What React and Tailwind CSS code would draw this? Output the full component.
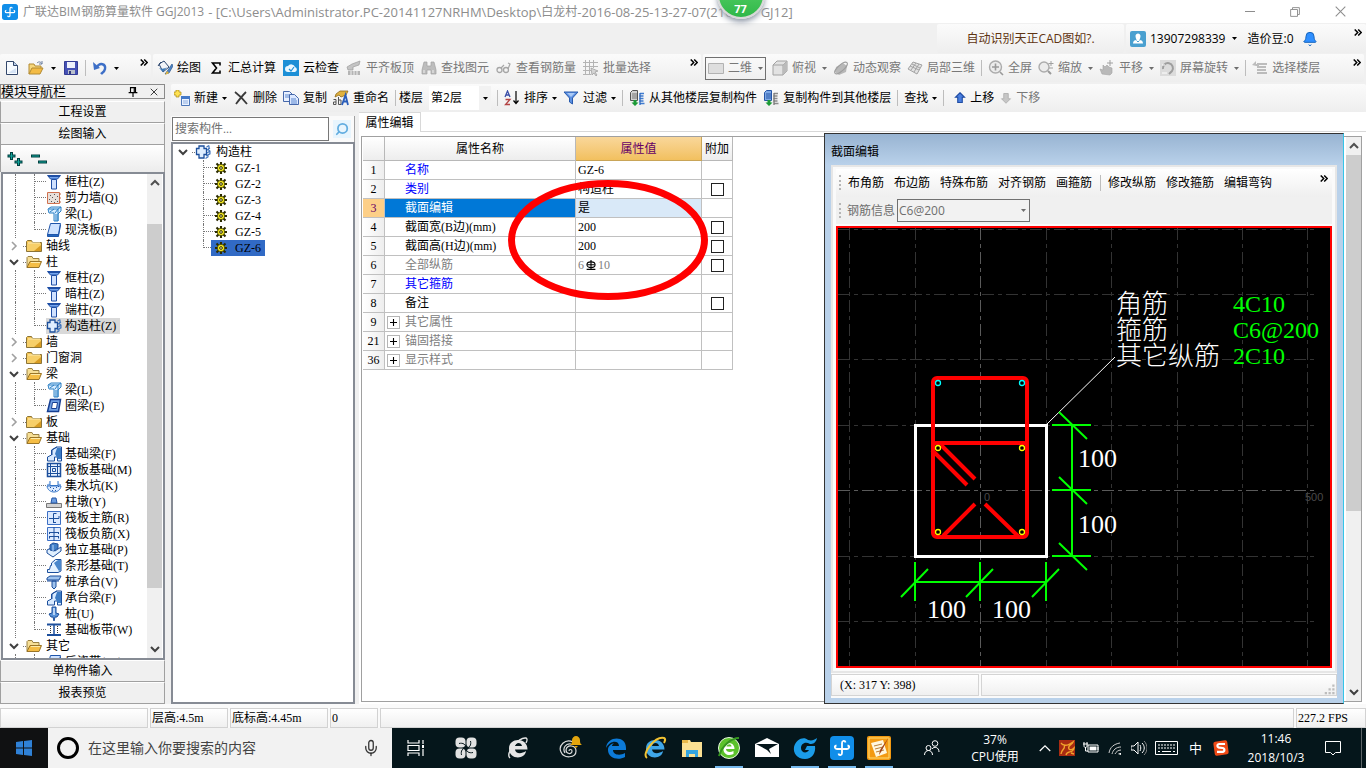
import { useState } from 'react';
import { Bell, Mic, Search, X } from 'lucide-react';

const ui = "font-['Open_Sans','Noto_Sans_CJK_SC',sans-serif]";
const song = "font-['Liberation_Serif','Noto_Sans_CJK_SC',serif]";

/* ---------- small shared pieces ---------- */

function Ico({ children, className = 'h-4 w-4' }) {
  return (
    <svg viewBox="0 0 16 16" fill="none" className={`shrink-0 ${className}`} aria-hidden="true">
      {children}
    </svg>
  );
}

function Caret({ gray }) {
  return (
    <svg viewBox="0 0 5 3" className="h-[3px] w-[5px] shrink-0" aria-hidden="true">
      <path d="M0 0h5L2.5 3z" fill={gray ? '#6d6d6d' : '#000'} />
    </svg>
  );
}

function More({ className = '' }) {
  return (
    <button type="button" aria-label="更多" className={`h-[7px] w-2 shrink-0 ${className}`}>
      <svg viewBox="0 0 8 7" fill="none" className="h-[7px] w-2">
        <path d="M.7.5l3 3-3 3M4.2.5l3 3-3 3" stroke="#000" strokeWidth="1.5" />
      </svg>
    </button>
  );
}

function Sep() {
  return <span className="h-4 w-px shrink-0 bg-[#bdbdbd]" />;
}

function Tool({ icon, label, caret, gray }) {
  return (
    <button type="button" className={`flex shrink-0 items-center gap-1 ${gray ? 'text-[#787878]' : 'text-black'}`}>
      {icon}
      {label && <span>{label}</span>}
      {caret && <span className={gray ? 'pl-[2px]' : ''}><Caret gray={gray} /></span>}
    </button>
  );
}

function Chevron({ open }) {
  return (
    <svg viewBox="0 0 10 10" fill="none" className="h-[10px] w-[10px] shrink-0" aria-hidden="true">
      {open ? <path d="M1 3l4 4 4-4" stroke="#404040" strokeWidth="2" /> : <path d="M3 1l4 4-4 4" stroke="#a0a0a0" strokeWidth="1.6" />}
    </svg>
  );
}

/* ---------- toolbar icons ---------- */

const NewDoc = () => (
  <Ico><path d="M2.5 1.5h7l4 4v9h-11z" fill="#f7fbff" stroke="#33476b" /><path d="M9.5 1.5v4h4" fill="#bcd0ea" stroke="#33476b" /><path d="M4 13h8V8z" fill="#d5e3f5" /></Ico>
);
const OpenDoc = () => (
  <Ico><path d="M1 14V4h5l1 2h6v3" fill="#f6d77c" stroke="#b28a32" /><path d="M1 14l3-6h11l-3 6z" fill="#f3bb45" stroke="#b28a32" /><path d="M9 3c2-2 4-1 5 1m0-3v3h-3" stroke="#6a7f9f" /></Ico>
);
const Save = () => (
  <Ico><path d="M1.5 1.5h13v13h-13z" fill="#4551b5" stroke="#343c94" /><path d="M4 2h8v6H4z" fill="#eef1fb" /><path d="M5 10h7v4H5z" fill="#b9c0cc" /><path d="M6 11h2v3H6z" fill="#333b80" /></Ico>
);
const Undo = () => (
  <Ico><path d="M5 7c3-5 9-3 8 2-.5 3-3 4-4 5" stroke="#3d6fc7" strokeWidth="2.4" /><path d="M1 2l1 8 6-2z" fill="#3d6fc7" /></Ico>
);
const Paint = () => (
  <Ico><path d="M2 4l5-3 5 6-6 5z" fill="#f2f4f8" stroke="#2b466f" /><path d="M1 6l3-4" stroke="#2b466f" /><path d="M2 8c2 1 6 1 8-1l-4 5z" fill="#3d7ab8" /><path d="M15 4l-4 6-3 4 4-1 4-7z" fill="#4d84c6" stroke="#2a568e" strokeWidth=".7" /><path d="M8 15l2-4 2 2z" fill="#e7b93a" /></Ico>
);
const Sigma = () => (
  <Ico><path d="M12 5.500V3H4.500l4 5-4 5H12v-2.500" stroke="#000" strokeWidth="1.600" /></Ico>
);
const Cloud = () => (
  <Ico><path d="M0 0h16v16H0z" fill="#1c8fd6" /><path d="M5 12a3 3 0 010-6 4 4 0 017 1 2.600 2.600 0 010 5z" fill="#e9f7ff" /><path d="M6 9l2 2 3-4" stroke="#1c8fd6" strokeWidth="1.200" /></Ico>
);
const Level = () => (
  <Ico><path d="M1 7l5-3 8-3-1 4-6 2v3H2z" fill="#c4c4c4" stroke="#9c9c9c" strokeWidth=".7" /><path d="M2 11h12v4H2z" fill="#b4b4b4" /><path d="M5 11v4M8 11v4M11 11v4" stroke="#efefef" /></Ico>
);
const Binoc = () => (
  <Ico><path d="M3 2h3v4h4V2h3l2 8v4h-5v-4H6v4H1v-4z" fill="#bdbdbd" stroke="#a0a0a0" strokeWidth=".7" /><path d="M3 10v3M12 10v3" stroke="#eee" /></Ico>
);
const Glasses = () => (
  <Ico><circle cx="3.500" cy="10" r="2.500" stroke="#a6a6a6" strokeWidth="1.300" /><circle cx="10" cy="10" r="2.500" stroke="#a6a6a6" strokeWidth="1.300" /><path d="M5 8l3-3M12 9l2-5-2-1" stroke="#a6a6a6" strokeWidth="1.200" /></Ico>
);
const Batch = () => (
  <Ico><path d="M2.500 0v15M6.500 0v15M10.500 0v8M0 2.500h15M0 6.500h15M0 10.500h8M0 14.500h8" stroke="#b4b4b4" /><path d="M8 8l7 3-3 1 2 3-1 1-2-3-2 2z" fill="#d4d4d4" stroke="#999" strokeWidth=".7" /></Ico>
);
const Flat = () => (
  <Ico><path d="M.5 3.500h15v10H.5z" fill="#dedede" stroke="#b2b2b2" /></Ico>
);
const Cube = () => (
  <Ico><path d="M1 5l4-4h10v10l-4 4H1z" fill="#e2e2e2" stroke="#a2a2a2" /><path d="M1 5h10v10M11 5l4-4" stroke="#a2a2a2" /><path d="M11 5l4-4v10l-4 4z" fill="#bbb" /></Ico>
);
const Orbit = () => (
  <Ico><path d="M3 7l7-4 4 3-1 6-7 3-4-3z" fill="#b8b8b8" /><ellipse cx="8" cy="8" rx="8" ry="3" transform="rotate(-42 8 8)" stroke="#9d9d9d" /></Ico>
);
const Part3d = () => (
  <Ico><path d="M1 9l5-7 9 3-5 9z" fill="#e2e2e2" stroke="#a3a3a3" /><path d="M4 10l5-7M7 12l5-8M3 6l9 4M5 4l8 4" stroke="#a3a3a3" /></Ico>
);
const Full = () => (
  <Ico><circle cx="7.500" cy="7" r="6" fill="#ececec" stroke="#acacac" strokeWidth="1.400" /><path d="M4 7h7M7.500 3.500v7M12 12l3 3" stroke="#9a9a9a" strokeWidth="1.600" /></Ico>
);
const Zoom = () => (
  <Ico><circle cx="6" cy="7" r="5" fill="#ececec" stroke="#acacac" strokeWidth="1.400" /><path d="M10 11l3 3" stroke="#9a9a9a" strokeWidth="2" /><path d="M13 1v5M10.500 3.500h5M11 8h4" stroke="#a0a0a0" /></Ico>
);
const Pan = () => (
  <Ico><path d="M3 14l-2-5 3 1V5l2 2 2-2 2 2 3 1v5l-2 2z" fill="#b9b9b9" stroke="#a2a2a2" strokeWidth=".6" /><path d="M11 0v6M8 3h6" stroke="#a0a0a0" /></Ico>
);
const Rotate = () => (
  <Ico><path d="M0 0h16v16H0z" fill="#dcdcdc" /><path d="M3 9a5 5 0 119 2l-3 3" stroke="#9e9e9e" strokeWidth="2" /><path d="M2 5h3M2 13h5" stroke="#fff" /></Ico>
);
const FloorSel = () => (
  <Ico><path d="M5 4h10M5 7h9M5 10h9M5 13h10" stroke="#a9a9a9" strokeWidth="1.500" /><path d="M0 5l4-4v3h3v2H4z" fill="#bdbdbd" /></Ico>
);
const NewItem = () => (
  <Ico><path d="M2 0h3v2h2v3H5v2H2V5H0V2h2z" fill="#ffe252" stroke="#a88718" strokeWidth=".7" /><path d="M7.500 6.500h8v9h-8z" fill="#eaf2ff" stroke="#4d77b8" /><path d="M7 6h9v3H7z" fill="#4479c8" /><path d="M9 11h5M9 13h5" stroke="#8eaee0" /></Ico>
);
const Delete = () => (
  <Ico><path d="M2 2c4 3 8 7 12 12M13 2C9 6 6 10 3 14" stroke="#3a3a3a" strokeWidth="1.800" /></Ico>
);
const CopyIco = () => (
  <Ico><path d="M.5 1.500h6l3 3v7h-9z" fill="#e8f0ff" stroke="#4668ab" /><path d="M6.500 4.500h5l4 4v6h-9z" fill="#dce8ff" stroke="#4668ab" /><path d="M2 5h4M2 7h4M8 9h5M8 11h6M8 13h6" stroke="#5d88cf" /></Ico>
);
const Rename = () => (
  <Ico><path d="M3 4l4-3h8l-2 4-5 2-2-2-4 2z" fill="#e0b23f" stroke="#8f6a1a" strokeWidth=".8" /><path d="M.5 9.500h2.500v5H.5v-2.500H3M5.500 7v7.500H8V10H5.500" stroke="#555" /><path d="M9 15l3.500-10L15 15M10.500 11.500h4" stroke="#2a5dba" strokeWidth="1.800" /></Ico>
);
const Sort = () => (
  <Ico><path d="M1 7l2.500-6L6 7M2 5h3" stroke="#3a4fa8" strokeWidth="1.300" /><path d="M1.500 9.500H6L1.500 14.500H6" stroke="#b34444" strokeWidth="1.300" /><path d="M12 1v12M9.500 10.500l2.500 3 2.500-3" stroke="#000" strokeWidth="1.200" /></Ico>
);
const Filter = () => (
  <Ico><path d="M1 2h14L9.500 8v6l-3-2V8z" fill="#5c90e2" stroke="#285aad" /><path d="M4 3h8L8 7z" fill="#a9c9f6" /></Ico>
);
const FromFloor = ({ blue }) => (
  <Ico><path d="M3.500.5h5v10h-7v-8z" fill={blue ? '#7da8e6' : '#d2d2d2'} stroke={blue ? '#2757a8' : '#555'} /><path d="M3 4h5M3 6h5M3 8h5" stroke={blue ? '#2757a8' : '#777'} /><path d="M11 3.500h4M10.500 6h4M10.500 8.500h4M10.500 11h4M11 13.500h4.500" stroke={blue ? '#8b8b8b' : '#3f7bd0'} strokeWidth="1.700" /><path d="M11 3v12" stroke={blue ? '#777' : '#2c66bd'} strokeWidth="1.300" /><path d="M4.500 10h3v2.500h2L6 16l-3.500-3.500h2z" fill="#1c9a36" /></Ico>
);
const MoveUp = () => (
  <Ico className="h-3 w-3"><path d="M8 1l6 6h-3v7H5V7H2z" fill="#4a7fe0" stroke="#1f4ca3" strokeWidth="1.500" /></Ico>
);
const MoveDown = () => (
  <Ico className="h-3 w-3"><path d="M8 15l6-6h-3V2H5v7H2z" fill="#c6c6c6" stroke="#b0b0b0" strokeWidth="1.200" /></Ico>
);

/* ---------- tree icons ---------- */

const blue = '#1c4f9c';
const treeIcons = {
  folder: <Ico><path d="M.5 13.500v-10l1-1h4l1 2h9v9z" fill="#f4c453" stroke="#8c7437" /><path d="M1 6h14v7H1z" fill="#f7cf69" /><path d="M8 13l7-6v6z" fill="#d89c22" /><path d="M2 5h12" stroke="#fff3c4" /></Ico>,
  open: <Ico><path d="M1 13.500v-10l1-1h4l1 2h6v3" fill="#f7df96" stroke="#9a8143" /><path d="M1 13.500l3-6h11.500l-2.500 6z" fill="#f5bd45" stroke="#9a7528" /><path d="M5 8.500h9" stroke="#fdeaa9" /></Ico>,
  column: <Ico><path d="M1.500 1.500h13l-3 3.500h-7z" fill="#74a5ee" stroke="#1f4fa5" /><path d="M5.500 5.500h5v9.500h-5z" fill="#cfe1ff" stroke="#1f4fa5" /><path d="M2 2.500h12" stroke="#1f4fa5" /></Ico>,
  wall: <Ico><path d="M1.500 2.500h12v11h-12z" fill="#e8e0da" stroke="#d0714f" /><path d="M4 5.500h1M8 4.500h1M11 6.500h1M6 7.500h1M3 9.500h1M9 9.500h1M5 11.500h1M11 11.500h1M8 12.500h1" stroke="#555" /><path d="M13 4h2M13 8h2M13 12h2" stroke="#c2643c" /></Ico>,
  beam: <Ico><path d="M2 3l3-2h10v4l-3 3v7H8V7H3z" fill="#d7ecff" stroke="#2c80c4" /><path d="M3 3h9l3-2M12 3v5M4 6l4-3M9 7l3-4M10 15V8m2 7V8" stroke="#2c80c4" /></Ico>,
  slab: <Ico><path d="M4.500 1.500h10l-2 11h-11z" fill="#cfe3ff" stroke="#1f55aa" /><path d="M1.500 12.500h11v2h-11zM12.500 14l2-11" fill="#2467bd" stroke="#1f55aa" /></Ico>,
  ring: <Ico><path d="M4.500 1.500h10l-2 12h-11z" fill="#71a1e4" stroke="#163f92" strokeWidth="1.500" /><path d="M6.500 4.500h5l-1 6h-5z" fill="#fff" stroke="#163f92" /></Ico>,
  gz: <Ico><path d="M4 2h5v2.500h2.500v6H9V14H4v-3.500H1.500v-6H4z" fill="#dfeeff" stroke="#1c4f9c" strokeWidth="1.300" /><path d="M11.500 3l2.500-1.500M12 6l3-2M12 9l3-2M11 12l4-2.500M10.500 14.500l3-2M14 1.500V4l-1 1.500 2 1.500v3l-2 1v2" stroke="#3f74bd" strokeWidth="1.100" /></Ico>,
  fbeam: <Ico><path d="M1.500 15V11l4-2V4l5-3h5v14h-4v-4h-3v4z" fill="#d8eaff" stroke={blue} /><path d="M9 8l2-6h4v11h-3z" fill="#3c7cc4" /><path d="M6 9V4l5-3" stroke={blue} /></Ico>,
  raft: <Ico><path d="M1.500 1.500h13v13h-13z" fill="#e7f2ff" stroke={blue} strokeWidth="1.500" /><path d="M4.500 1v14M11.500 1v14M1 4.500h14M1 11.500h14M6.500 6.500h3v3h-3z" stroke={blue} /></Ico>,
  pit: <Ico><path d="M1 7h3V3M12 3v4h3M4 7.500h8M1 8c1 8 13 8 14 0z" fill="#dcebff" stroke="#3475c7" /><path d="M4 9.500h1M7 10.500h1M10 9.500h1M12 8.500h1M6 12.500h1M9 12.500h1" stroke="#1f55aa" /></Ico>,
  pier: <Ico><path d="M.5 9.500h15v4H.5z" fill="#d2d2d2" stroke="#777" /><path d="M5 9l1-5h4l1 5z" fill="#6b9de0" stroke="#2456a7" /></Ico>,
  rebarR: <Ico><path d="M1.500 1.500h13v13h-13z" fill="#dceaff" stroke="#3c6fc4" /><path d="M3 8.500h10M7.500 13V3.500h3M13 8.500V6M7.500 12.500H10" stroke={blue} /></Ico>,
  rebarX: <Ico><path d="M1.500 1.500h13v13h-13z" fill="#dceaff" stroke="#3c6fc4" /><path d="M8 1v14M3 6.500h10M3 10.500h10M3.500 6v2M12.500 6v2M3.500 12.500v-2M12.500 12.500v-2" stroke={blue} /></Ico>,
  single: <Ico><path d="M1 8l4-2 4 3 6-4v4l-8 6-6-4z" fill="#dfefff" stroke={blue} /><path d="M4 8V3l3-2 5 1v4L8 9z" fill="#417fc6" stroke={blue} /><path d="M7 9V3" stroke="#bcd9ff" /></Ico>,
  strip: <Ico><path d="M1.500 14.500v-3h2l1-4h1V5l4-3.500h5.500V13l-3 1.500z" fill="#e4f1ff" stroke={blue} /><path d="M8 5l4-3h3v10l-2 1-2-3z" fill="#4a86cb" /></Ico>,
  cap: <Ico><path d="M1 4l3-2h11l-2 4H1zM6 7h4v6l-2 2-2-2z" fill="#9fc3ee" stroke={blue} /><path d="M1 7h12" stroke={blue} /></Ico>,
  pile: <Ico><path d="M6 1h4v6l3 1-2 3H9l-1 4-1-4H5L3 8l3-1z" fill="#5993d8" stroke={blue} /><path d="M8 2v7" stroke="#d7e9ff" strokeWidth="1.500" /></Ico>,
  band: <Ico><path d="M1 2.500h14M1 13h14" stroke={blue} strokeWidth="1.800" /><path d="M4.500 4v8M11.500 4v8" stroke="#333" strokeDasharray="1 1" /><path d="M8 3v9" stroke={blue} strokeWidth="1.500" /></Ico>,
  gear: <Ico className="h-3 w-3"><path d="M8 0v16M0 8h16M2 2l12 12M14 2L2 14" stroke="#2b2b00" strokeWidth="2.800" /><circle cx="8" cy="8" r="5" fill="#f0e51e" stroke="#2b2b00" strokeWidth="1" /><circle cx="8" cy="8" r="1.800" fill="#fffbc0" stroke="#2b2b00" strokeWidth="1.300" /></Ico>,
};

const tree = [
  { items: [['column', '框柱(Z)'], ['wall', '剪力墙(Q)'], ['beam', '梁(L)'], ['slab', '现浇板(B)']] },
  { name: '轴线' },
  { name: '柱', items: [['column', '框柱(Z)'], ['column', '暗柱(Z)'], ['column', '端柱(Z)'], ['gz', '构造柱(Z)']] },
  { name: '墙' },
  { name: '门窗洞' },
  { name: '梁', items: [['beam', '梁(L)'], ['ring', '圈梁(E)']] },
  { name: '板' },
  {
    name: '基础',
    items: [
      ['fbeam', '基础梁(F)'], ['raft', '筏板基础(M)'], ['pit', '集水坑(K)'], ['pier', '柱墩(Y)'],
      ['rebarR', '筏板主筋(R)'], ['rebarX', '筏板负筋(X)'], ['single', '独立基础(P)'], ['strip', '条形基础(T)'],
      ['cap', '桩承台(V)'], ['fbeam', '承台梁(F)'], ['pile', '桩(U)'], ['band', '基础板带(W)'],
    ],
  },
  { name: '其它', items: [['slab', '后浇带(JD)']] },
];

function Branch({ last }) {
  return (
    <span className={`w-3 shrink-0 self-start border-l border-dotted border-[#777] ${last ? 'h-2' : 'h-4'}`}>
      <span className="block h-2 border-b border-dotted border-[#777]" />
    </span>
  );
}

function TreeGroup({ group, selected, onSelect }) {
  return (
    <li>
      {group.name && (
        <div className="flex h-4 items-center pl-[6px]">
          <button type="button" aria-label={group.name} className="flex"><Chevron open={!!group.items} /></button>
          <span className="ml-1 w-[3px] border-b border-dotted border-[#777]" />
          {treeIcons[group.items ? 'open' : 'folder']}
          <span className="ml-1">{group.name}</span>
        </div>
      )}
      {group.items?.map(([icon, label], i) => (
        <div key={label + i} className="flex h-4 items-center pl-3">
          <span className="h-4 w-[19px] shrink-0 border-l border-dotted border-[#777]" />
          <Branch last={i === group.items.length - 1} />
          <button
            type="button"
            onClick={() => onSelect(label)}
            className={`flex h-4 items-center gap-[3px] pr-1 whitespace-nowrap ${selected === label ? 'bg-[#d9d9d9]' : ''}`}
          >
            {treeIcons[icon]}
            {label}
          </button>
        </div>
      ))}
    </li>
  );
}

function ScrollBar({ thumb }) {
  return (
    <div className="flex w-[15px] shrink-0 flex-col bg-[#f0f0f0]">
      <span className="flex h-[18px] items-center justify-center">
        <svg viewBox="0 0 10 10" fill="none" className="h-[10px] w-[10px]"><path d="M1 7l4-4 4 4" stroke="#505050" strokeWidth="2" /></svg>
      </span>
      <div className="flex min-h-0 grow flex-col">{thumb}</div>
      <span className="flex h-[18px] items-center justify-center"><Chevron open /></span>
    </div>
  );
}

const dockButton = 'h-[22px] shrink-0 border border-[#a0a0a0] border-t-white bg-[#f0f0f0] text-center leading-5';

function ModuleDock() {
  const [selected, setSelected] = useState('构造柱(Z)');
  return (
    <aside className={`flex w-[165px] shrink-0 flex-col bg-[#f0f0f0] text-[12px] ${song}`}>
      <div className="mb-[2px] flex h-[15px] shrink-0 items-center border border-[#8a8a8a] pr-1">
        <h2 className="grow text-[13px] leading-[13px]">模块导航栏</h2>
        <button type="button" aria-label="固定" className="mr-[10px]">
          <Ico className="h-[10px] w-[10px]"><path d="M4 1h8v8H4zM1 9h14M8 9v7M10 1v8" stroke="#000" strokeWidth="1.800" /></Ico>
        </button>
        <button type="button" aria-label="关闭"><X className="h-3 w-3" strokeWidth={1.5} /></button>
      </div>
      <button type="button" className={dockButton}>工程设置</button>
      <button type="button" className={dockButton}>绘图输入</button>
      <div className="flex h-[27px] shrink-0 items-center gap-2 border-x border-[#a0a0a0] bg-linear-to-b from-white to-[#ececec] pl-[6px]">
        <button type="button" aria-label="全部展开"><Ico><path d="M4.500 1v8M.5 5h8M11.500 7v8M7.500 11h8" stroke="#003f3f" strokeWidth="3" /><path d="M4.500 2v6M1.500 5h6M11.500 8v6M8.500 11h6" stroke="#10a59b" /></Ico></button>
        <button type="button" aria-label="全部折叠"><Ico><path d="M0 5h9M7 11h9" stroke="#003f3f" strokeWidth="3" /><path d="M1 5h7M8 11h7" stroke="#10a59b" /></Ico></button>
      </div>
      <div className="ml-px flex min-h-0 grow border-2 border-[#868b94] bg-white pr-px">
        <ul className="h-full min-w-0 grow basis-0 overflow-hidden leading-4">
          {tree.map((g, i) => (
            <TreeGroup key={i} group={g} selected={selected} onSelect={setSelected} />
          ))}
        </ul>
        <ScrollBar
          thumb={<><span className="grow-[34]" /><span className="grow-[391] bg-[#cdcdcd]" /><span className="grow-[56]" /></>}
        />
      </div>
      <button type="button" className={dockButton}>单构件输入</button>
      <button type="button" className={dockButton}>报表预览</button>
    </aside>
  );
}

/* ---------- component list ---------- */

const components = ['GZ-1', 'GZ-2', 'GZ-3', 'GZ-4', 'GZ-5', 'GZ-6'];

function ComponentList() {
  const [current, setCurrent] = useState('GZ-6');
  return (
    <section className={`flex w-[184px] shrink-0 flex-col pt-1 text-[12px] ${song}`}>
      <div className="flex h-[26px] shrink-0 items-center border-r border-[#a0a0a0] bg-[#fafafa] pl-px">
        <input aria-label="搜索构件" placeholder="搜索构件..." className="h-6 w-[157px] border border-[#777] bg-white px-[2px] leading-5 placeholder:text-[#707070]" />
        <button type="button" aria-label="搜索" className="ml-1 flex h-[18px] w-[18px] items-center justify-center bg-[#e8f5fd]">
          <Search className="h-[14px] w-[14px] -scale-x-100 text-[#62ade0]" strokeWidth={3} />
        </button>
      </div>
      <ul className="min-h-0 grow border-2 border-[#868b94] bg-white leading-4">
        <li>
          <div className="flex h-4 items-center pl-[5px]">
            <button type="button" aria-label="构造柱" className="flex"><Chevron open /></button>
            <span className="ml-1 w-[3px] border-b border-dotted border-[#777]" />
            {treeIcons.gz}
            <span className="ml-[5px]">构造柱</span>
          </div>
        </li>
        {components.map((name, i) => (
          <li key={name} className="flex h-4 items-center pl-[30px]">
            <Branch last={i === components.length - 1} />
            <button
              type="button"
              onClick={() => setCurrent(name)}
              className={`-ml-1 flex h-4 items-center gap-2 px-1 ${current === name ? 'bg-[#316ac5]' : ''}`}
            >
              {treeIcons.gear}
              {name}
            </button>
          </li>
        ))}
      </ul>
    </section>
  );
}

/* ---------- property grid ---------- */

const rows = [
  { no: 1, name: '名称', value: 'GZ-6', tone: 'text-[#0000ff]' },
  { no: 2, name: '类别', value: '构造柱', tone: 'text-[#0000ff]', extra: true },
  { no: 3, name: '截面编辑', value: '是', tone: 'text-white', active: true },
  { no: 4, name: '截面宽(B边)(mm)', value: '200', extra: true },
  { no: 5, name: '截面高(H边)(mm)', value: '200', extra: true },
  { no: 6, name: '全部纵筋', rebar: true, tone: 'text-[#808080]', extra: true },
  { no: 7, name: '其它箍筋', tone: 'text-[#0000ff]' },
  { no: 8, name: '备注', extra: true },
  { no: 9, name: '其它属性', tone: 'text-[#808080]', group: true },
  { no: 21, name: '锚固搭接', tone: 'text-[#808080]', group: true },
  { no: 36, name: '显示样式', tone: 'text-[#808080]', group: true },
];

function PropertyGrid() {
  const head = 'border-r border-b border-[#b8b8b8] bg-linear-to-b from-white to-[#ededed] font-normal';
  const cell = 'h-[19px] border-r border-b border-[#c0c0c0] p-0';
  return (
    <table className={`w-[370px] table-fixed border-separate border-spacing-0 text-[12px] leading-4 ${song}`}>
      <colgroup>
        <col className="w-[22px]" />
        <col className="w-[191px]" />
        <col className="w-[126px]" />
        <col className="w-[31px]" />
      </colgroup>
      <thead>
        <tr className="h-6">
          <th className={head} aria-label="序号" />
          <th className={head}>属性名称</th>
          <th className="border-r border-b border-[#c9a558] bg-linear-to-b from-[#f9d79a] to-[#f2c05e] font-normal text-[#660066]">属性值</th>
          <th className={head}>附加</th>
        </tr>
      </thead>
      <tbody>
        {rows.map((r) => (
          <tr key={r.no}>
            <td className={`${cell} text-center ${r.active ? 'bg-[#fdcf87] text-[#660066]' : 'bg-linear-to-r from-white to-[#eeeeee]'}`}>{r.no}</td>
            <td className={`${cell} ${r.tone || ''} ${r.active ? 'bg-[#0078d7]' : ''}`}>
              <div className="flex items-center">
                <span className="flex w-5 shrink-0 pl-[2px]">
                  {r.group && (
                    <button type="button" aria-label={`展开${r.name}`} className="flex h-[13px] w-[13px] items-center justify-center border border-[#b5b5b5]">
                      <Ico className="h-[7px] w-[7px]"><path d="M8 0v16M0 8h16" stroke="#000" strokeWidth="2.500" /></Ico>
                    </button>
                  )}
                </span>
                {r.name}
              </div>
            </td>
            <td className={`${cell} pl-[2px] ${r.active ? 'bg-[#d9e9f8]' : ''}`}>
              {r.rebar ? (
                <span className="flex items-center gap-[2px] text-[#808080]">
                  6
                  <Ico className="h-[10px] w-[10px]"><ellipse cx="8" cy="7.500" rx="6.500" ry="4.500" stroke="#000" strokeWidth="1.800" /><path d="M8 0v15M2 7.500h12M1 15h14" stroke="#000" strokeWidth="1.800" /></Ico>
                  10
                </span>
              ) : r.value}
            </td>
            <td className={`${cell} text-center`}>
              {r.extra && <input type="checkbox" aria-label={`附加 ${r.name}`} className="mx-auto block h-[13px] w-[13px] appearance-none border border-[#222] bg-white" />}
            </td>
          </tr>
        ))}
      </tbody>
    </table>
  );
}

/* ---------- section editor window ---------- */

const gridX = [849, 915, 1046, 1111, 1177, 1242, 1307];
const gridY = [229, 294, 359, 425, 556, 621];

function SectionDrawing() {
  return (
    <svg viewBox="838 228 492 438" preserveAspectRatio="xMidYMid meet" className="h-full w-full bg-black" role="img" aria-label="截面">
      <g stroke="#333" strokeDasharray="12 4 4 4">
        {gridX.map((x) => <path key={x} d={`M${x}.5 228V666`} />)}
        {gridY.map((y) => <path key={y} d={`M838 ${y}.5H1318`} />)}
      </g>
      <path d="M980.500 228V666M838 490.500H1318" stroke="#5a5a5a" strokeDasharray="12 4 4 4" />
      <path d="M915.500 425.500h131v131h-131z" fill="none" stroke="#fff" strokeWidth="3" />
      <path d="M1047 424l68-67" stroke="#fff" />
      <g fill="none" stroke="#f00" strokeWidth="4">
        <rect x="933" y="378" width="94" height="159" rx="4" />
        <path d="M933 450v-4q0-3 3-3h88q3 0 3 3" />
        <path d="M932 450l35 35M941 445l34 34M975 504l-32 32M985 504l33 32" />
      </g>
      <g fill="none" strokeWidth="1.300">
        <g stroke="#0ff"><circle cx="938" cy="383" r="2.500" /><circle cx="1022" cy="383" r="2.500" /></g>
        <g stroke="#ff0">
          <circle cx="938" cy="448" r="2.500" /><circle cx="1022" cy="448" r="2.500" />
          <circle cx="938" cy="532" r="2.500" /><circle cx="1022" cy="532" r="2.500" />
        </g>
      </g>
      <g stroke="#0f0" strokeWidth="2">
        <path d="M1072 425v131M1052 425h39M1052 490h39M1052 556h39" />
        <path d="M1059 412l28 27M1059 477l28 27M1059 543l28 27" />
        <path d="M915 582h131M915 562v39M980 562v39M1046 562v39" />
        <path d="M901 597l27-28M966 597l27-28M1032 597l27-28" />
      </g>
      <g className={`${song} text-[26px]`} fill="#fff">
        <text x="1078" y="467">100</text>
        <text x="1078" y="533">100</text>
        <text x="927" y="618">100</text>
        <text x="992" y="618">100</text>
        <g className="font-light">
          <text x="1116" y="313">角筋</text>
          <text x="1116" y="339">箍筋</text>
          <text x="1116" y="365">其它纵筋</text>
        </g>
      </g>
      <g className={`${song} text-[24px]`} fill="#0f0">
        <text x="1233" y="312">4C10</text>
        <text x="1233" y="338">C6@200</text>
        <text x="1233" y="364">2C10</text>
      </g>
      <g className="font-['Liberation_Sans',sans-serif] text-[11px]" fill="#4a4a4a">
        <text x="984" y="501">0</text>
        <text x="1305" y="501">500</text>
      </g>
    </svg>
  );
}

function Grip() {
  return <span className="h-[15px] w-[2px] shrink-0 border-l-2 border-dotted border-[#b5b5b5]" />;
}

function SectionEditor() {
  return (
    <div className={`absolute -top-1 right-[17px] -bottom-[3px] flex w-[520px] flex-col border border-[#333] border-r-[#35c5e8] bg-[#b9d1ea] px-[6px] pb-[5px] text-[12px] ${ui}`}>
      <h2 className="-mx-[6px] flex h-[31px] shrink-0 items-center bg-linear-to-b from-[#98b4d2] to-[#b9d1ea] px-[6px] pt-1">截面编辑</h2>
      <div className="flex min-h-0 grow flex-col border-2 border-[#e6e6e6] bg-[#fafafa] px-[3px] pt-[2px]">
        <div className="flex h-7 shrink-0 items-center gap-[10px] bg-linear-to-b from-white to-[#efefef] pl-[3px]">
          <div className="flex gap-[7px]"><Grip /><button type="button" className="leading-4">布角筋</button></div>
          <button type="button">布边筋</button>
          <button type="button">特殊布筋</button>
          <button type="button">对齐钢筋</button>
          <button type="button">画箍筋</button>
          <div className="-ml-[2px] flex items-center gap-[7px]"><Sep /><button type="button">修改纵筋</button></div>
          <button type="button">修改箍筋</button>
          <button type="button">编辑弯钩</button>
          <More className="mr-1 mb-[10px] ml-auto" />
        </div>
        <div className="flex h-[27px] shrink-0 items-center gap-[6px] bg-[#f0f0f0] pl-[3px] text-[#6e6e6e]">
          <Grip />
          <label htmlFor="rebar-info">钢筋信息</label>
          <div className="-ml-1 flex h-[23px] w-[133px] items-center border border-[#707070] bg-[#f2f2f2] pr-[3px]">
            <select id="rebar-info" className="min-w-0 grow appearance-none bg-transparent pl-px leading-5">
              <option>C6@200</option>
            </select>
            <Caret gray />
          </div>
        </div>
        <div className="mt-[2px] min-h-0 grow border-2 border-[#ff0000]"><SectionDrawing /></div>
        <span className="h-[3px] shrink-0" />
      </div>
      <div className={`flex h-[25px] shrink-0 gap-[2px] bg-[#fafafa] pt-px pb-[2px] ${song}`}>
        <span className="w-[148px] border border-[#d4d4d4] bg-linear-to-b from-white to-[#f0f0f0] pl-2 leading-5">(X: 317 Y: 398)</span>
        <span className="flex grow items-end justify-end border border-[#d4d4d4] bg-linear-to-b from-white to-[#f0f0f0]">
          <Ico className="h-3 w-3"><path d="M11 2h3v3h-3zM6 7h3v3H6zM11 7h3v3h-3zM1 12h3v3H1zM6 12h3v3H6zM11 12h3v3h-3z" fill="#bdbdbd" /></Ico>
        </span>
      </div>
    </div>
  );
}

/* ---------- top bars ---------- */

const bar = 'flex items-center rounded-[2px] bg-linear-to-b from-[#fbfbfb] to-[#eeeeee]';

function GldMark() {
  return (
    <>
      <rect width="24" height="24" rx="4" fill="#108ee9" />
      <path d="M15.500 6.500c-.5-2.500-3.500-2-3.500.5v10c0 2.500-3 3-3.500.5M6.500 9.500c-2.500.5-2 3.500.5 3.500h10c2.500 0 3-3 .5-3.500" stroke="#fff" strokeWidth="1.800" />
    </>
  );
}

function TitleBar() {
  return (
    <header className="flex h-[23px] shrink-0 items-center bg-white pl-[2px] text-[#8d8d8d]">
      <svg viewBox="0 0 24 24" fill="none" className="h-4 w-4 shrink-0" aria-hidden="true"><GldMark /></svg>
      <h1 className="ml-[5px] flex grow items-center whitespace-nowrap">
        <span className="mr-1">广联达BIM钢筋算量软件 GGJ2013</span>
        <span className="text-[13px]">- [C:\Users\Administrator.PC-20141127NRHM\Desktop\</span>
        <span>白龙村</span>
        <span className="mr-7 text-[13px]">-2016-08-25-13-27-07(216</span>
        <span className="text-[13px]">GJ12]</span>
      </h1>
      <div className="flex items-center gap-[35px] pr-[20px]">
        <button type="button" aria-label="最小化" className="flex h-3 w-[10px] items-center"><span className="h-px w-[10px] bg-[#8d8d8d]" /></button>
        <button type="button" aria-label="还原"><Ico className="h-[10px] w-[10px]"><path d="M1 4h11v11H1zM4 4V1h11v11h-3" stroke="#8d8d8d" strokeWidth="1.500" /></Ico></button>
        <button type="button" aria-label="关闭窗口"><Ico className="h-[11px] w-[11px]"><path d="M1 1l14 14M15 1L1 15" stroke="#8d8d8d" strokeWidth="1.500" /></Ico></button>
      </div>
    </header>
  );
}

function AccountRow() {
  return (
    <div className="flex h-[31px] shrink-0 justify-end gap-[2px] bg-[#f0f0f0] py-px">
      <a href="#tips" className={`${bar} w-[187px] justify-center text-[#5f3411]`}>自动识别天正CAD图如?.</a>
      <div className={`${bar} w-60 pl-1`}>
        <Ico><rect width="16" height="16" rx="2" fill="#4aa0d0" /><path d="M5.500 5c0-3.500 5-3.500 5 0 0 2-1 3-1 4 2 0 3.500 1 3.500 3.500H3C3 10 4.500 9 6.500 9c0-1-1-2-1-4z" fill="#fff" /><path d="M6.500 9.500L8 11l1.500-1.500" stroke="#4aa0d0" /></Ico>
        <button type="button" className="ml-1 flex items-center gap-[7px]">13907298339 <Caret /></button>
        <span className="ml-[10px]">造价豆:0</span>
        <button type="button" aria-label="通知" className="ml-2"><Bell className="h-4 w-4 fill-[#2f8fff] text-[#1766bd]" strokeWidth={1.5} /></button>
        <More className="mr-1 mb-3 ml-auto" />
      </div>
    </div>
  );
}

function MainToolbar() {
  return (
    <div className="flex h-[30px] shrink-0 gap-[2px] bg-[#f0f0f0] pr-[2px] pb-[2px]">
      <div className={`${bar} w-[151px] shrink-0 pl-1`}>
        <Tool icon={<NewDoc />} />
        <span className="ml-2"><Tool icon={<OpenDoc />} /></span>
        <span className="ml-[7px]"><Caret /></span>
        <span className="ml-[7px]"><Tool icon={<Save />} /></span>
        <span className="ml-[6px] flex"><Sep /></span>
        <span className="ml-[6px]"><Tool icon={<Undo />} /></span>
        <span className="ml-[6px]"><Caret /></span>
        <More className="mr-[3px] mb-3 ml-auto" />
      </div>
      <div className={`${bar} w-[548px] shrink-0 gap-[7px] pl-1`}>
        <Tool icon={<Paint />} label="绘图" />
        <Tool icon={<Sigma />} label="汇总计算" />
        <Tool icon={<Cloud />} label="云检查" />
        <Tool icon={<Level />} label="平齐板顶" gray />
        <Tool icon={<Binoc />} label="查找图元" gray />
        <Tool icon={<Glasses />} label="查看钢筋量" gray />
        <Tool icon={<Batch />} label="批量选择" gray />
        <More className="mr-[3px] mb-3 ml-auto" />
      </div>
      <div className={`${bar} min-w-0 grow gap-[6px] pl-[2px]`}>
        <span className="flex h-[23px] items-center border border-[#707070] px-[2px]"><Tool icon={<Flat />} label="二维" caret gray /></span>
        <Tool icon={<Cube />} label="俯视" caret gray />
        <Tool icon={<Orbit />} label="动态观察" gray />
        <Tool icon={<Part3d />} label="局部三维" gray />
        <Sep />
        <Tool icon={<Full />} label="全屏" gray />
        <Tool icon={<Zoom />} label="缩放" caret gray />
        <Tool icon={<Pan />} label="平移" caret gray />
        <Tool icon={<Rotate />} label="屏幕旋转" caret gray />
        <Sep />
        <Tool icon={<FloorSel />} label="选择楼层" gray />
        <More className="mr-[3px] mb-3 ml-auto" />
      </div>
    </div>
  );
}

function ComponentToolbar() {
  return (
    <div className={`${bar} h-[28px] shrink-0 gap-[6px] pl-[3px]`}>
      <Tool icon={<NewItem />} label="新建" caret />
      <Tool icon={<Delete />} label="删除" />
      <Tool icon={<CopyIco />} label="复制" />
      <Tool icon={<Rename />} label="重命名" />
      <div className="flex items-center gap-[3px]">
        <Sep />
        <label htmlFor="floor">楼层</label>
        <div className="ml-[3px] flex h-6 w-[62px] items-center bg-white">
          <select id="floor" className="min-w-0 grow appearance-none pl-[2px] leading-5">
            <option>第2层</option>
          </select>
          <span className="flex h-6 w-3 items-center justify-center bg-[#f2f2f2]"><Caret /></span>
        </div>
      </div>
      <Sep />
      <Tool icon={<Sort />} label="排序" caret />
      <Tool icon={<Filter />} label="过滤" caret />
      <Sep />
      <Tool icon={<FromFloor />} label="从其他楼层复制构件" />
      <Tool icon={<FromFloor blue />} label="复制构件到其他楼层" />
      <Sep />
      <Tool label="查找" caret />
      <Sep />
      <span className="ml-1 flex gap-[6px]">
        <Tool icon={<MoveUp />} label="上移" />
        <Tool icon={<MoveDown />} label="下移" gray />
      </span>
    </div>
  );
}

/* ---------- bottom bars ---------- */

function StatusBar() {
  const cell = 'border border-[#d2d2d2] bg-linear-to-b from-white to-[#f0f0f0] pl-px leading-[18px]';
  return (
    <footer className={`flex h-6 shrink-0 gap-[2px] bg-[#fafafa] pt-1 text-[12px] ${song}`}>
      <span className={`${cell} w-[148px]`} />
      <span className={`${cell} w-[78px]`}>层高:4.5m</span>
      <span className={`${cell} w-[98px]`}>底标高:4.45m</span>
      <span className={`${cell} w-12`}>0</span>
      <span className={`${cell} grow`} />
      <span className={`${cell} w-[70px]`}>227.2 FPS</span>
    </footer>
  );
}

function TaskIcon({ label, children, active, className = 'w-[37px]' }) {
  return (
    <button type="button" aria-label={label} className={`flex h-10 shrink-0 flex-col items-center justify-center ${className}`}>
      <span className={`flex grow items-center ${active ? 'pt-[2px]' : ''}`}>
        <svg viewBox="0 0 24 24" fill="none" className="h-6 w-6" aria-hidden="true">{children}</svg>
      </span>
      {active && <span className="h-[2px] w-7 bg-[#76b9ed]" />}
    </button>
  );
}

function EGlyph({ color }) {
  return <path d="M21.500 13.500H9c.3 4 6 5 11 1.500-1 9-17 9-17-2.500C3 1 21.500 1 21.500 13.500zM9 10h7c-.5-4-6.500-4-7 0z" fill={color} />;
}

function Taskbar() {
  return (
    <nav className="flex h-10 shrink-0 items-center bg-[#05161b] text-white">
      <button type="button" aria-label="开始" className="flex h-10 w-12 shrink-0 items-center justify-center bg-[#101112]">
        <Ico><path d="M0 2l7-1v6.500H0zM8 .9L16 0v7.500H8zM0 8.500h7V15l-7-1zM8 8.500h8V16l-8-1z" fill="#2f81d6" /></Ico>
      </button>
      <div className="flex h-10 w-[344px] shrink-0 items-center bg-[#f2f2f2] pr-[12px] pl-[9px]">
        <span className="h-[22px] w-[22px] shrink-0 rounded-full border-[3px] border-black" />
        <input aria-label="搜索" placeholder="在这里输入你要搜索的内容" className="ml-[9px] min-w-0 grow bg-transparent text-[14px] placeholder:text-[#444]" />
        <Mic className="h-[18px] w-[18px] text-[#333]" strokeWidth={1.7} />
      </div>
      <TaskIcon label="任务视图" className="w-12">
        <path d="M4 4v3h11V4M4 20v-3h11v3M4 9.500h11v5H4zM19 4v4M19 13v7" stroke="#fff" strokeWidth="1.200" /><path d="M18 9h2v3h-2z" fill="#fff" />
      </TaskIcon>
      <TaskIcon label="旋风" className="w-[52px]">
        <rect x="1.500" y="1.500" width="10" height="10" rx="4" fill="#e2e2e2" />
        <rect x="12.500" y="1.500" width="10" height="10" rx="4" fill="#e2e2e2" />
        <rect x="1.500" y="12.500" width="10" height="10" rx="4" fill="#e2e2e2" />
        <rect x="12.500" y="12.500" width="10" height="10" rx="4" fill="#e2e2e2" />
        <path d="M5 7.500c4-1 7 1 7 4.500 0 3.500 3 5.500 7 4.500M16.500 5c1 4-1 7-4.500 7s-5.500 3-4.500 7" stroke="#05161b" />
      </TaskIcon>
      <TaskIcon label="浏览器" className="w-[52px]">
        <EGlyph color="#e6e6e6" /><path d="M4 22C-1 17 13 1 20 2c2 1 1 3 0 5" stroke="#e6e6e6" strokeWidth="1.400" />
      </TaskIcon>
      <TaskIcon label="提醒" className="w-[51px]">
        <path d="M15 6C7 2 0 10 3 16c3 7 15 6 15-1 0-6-9-7-10-1 0 4 6 5 6 1 0-2-3-2-3 0M13 8c-5-1-9 4-6 9" stroke="#ddd" strokeWidth="1.200" />
        <path d="M12 9h12c-2-1-2-3-2-5s-2-4-4-4-4 2-4 4 0 4-2 5zM16 10h4l-2 2z" fill="#e3a50e" />
      </TaskIcon>
      <TaskIcon label="Edge" className="w-[41px]">
        <path d="M2 12C3 0 22-1 22 12v2H9c0 5 7 6 12 3v4C14 25 4 22 4 14c0-4 3-6 6-7-1 1-2 2-2 3h7C15 4 6 4 2 12z" fill="#0c7ad8" />
      </TaskIcon>
      <TaskIcon label="Internet Explorer"><EGlyph color="#3fa6e8" /><path d="M4 22C-2 18 12 0 21 2c2 1 1 3 0 5" stroke="#f1c233" strokeWidth="2" /></TaskIcon>
      <TaskIcon label="文件资源管理器">
        <path d="M2 4h8l1 2h11v15H2z" fill="#fbe093" /><path d="M2 4h6v3H2z" fill="#e9b84a" /><path d="M6 21v-7h12v7h-3v-3H9v3z" fill="#35a5e0" />
      </TaskIcon>
      <TaskIcon label="360浏览器" active>
        <circle cx="12" cy="12" r="10.500" fill="#5cc22c" stroke="#eafbe0" /><path d="M17.500 13H9c0 3 4 4 7.500 2v3C10 21 6 17 6.500 12.500 7 6 17.500 5 17.500 13zM9.500 10.500h5c0-3-4-3-5 0z" fill="#fff" /><path d="M2 20C5 10 14 2 22 2" stroke="#34961f" strokeWidth="2" />
      </TaskIcon>
      <TaskIcon label="邮件" className="w-[39px]"><path d="M0 8L12 2l12 6v13H0z" fill="#fff" /><path d="M1 8h22l-9 5 2 5-4-4z" fill="#05161b" /></TaskIcon>
      <TaskIcon label="广联达" active>
        <path d="M24 2c-1 5-4 6-7 6-5-3-9 0-9 4 0 5 6 6 8 2h-4l2-4h8c1 7-3 13-10 13C4 23 0 17 1 11 3 3 11 0 15 4c4 1 6 0 9-2z" fill="#1b9ce8" />
      </TaskIcon>
      <TaskIcon label="GGJ2013" active><GldMark /></TaskIcon>
      <TaskIcon label="便笺" active>
        <rect width="24" height="24" rx="2" fill="#f39a12" /><path d="M2 2h20v20H2z" stroke="#ffdc73" /><path d="M4 7l12-3 4 13-11 4z" fill="#fff7df" /><path d="M7 10l8-2M8 13l8-2M9 16l8-2" stroke="#b9803c" /><path d="M22 1l-8 15-2 3 1-5z" fill="#a3441b" />
      </TaskIcon>
      <div className="ml-auto flex shrink-0 items-center">
        <button type="button" aria-label="人脉" className="mr-[31px]">
          <Ico><circle cx="4.500" cy="8" r="2.500" stroke="#fff" /><path d="M.5 15c0-6 8-6 8 0" stroke="#fff" /><circle cx="11" cy="3.500" r="2.800" stroke="#fff" /><path d="M8 9c2-3 7-2 7 3" stroke="#fff" /></Ico>
        </button>
        <div className="mr-5 w-[48px] text-center leading-[17px]">37%<br />CPU使用</div>
        <div className="flex items-center gap-2">
          <Ico className="h-3 w-3"><path d="M1 12l7-7 7 7" stroke="#fff" strokeWidth="1.600" /></Ico>
          <Ico><path d="M0 0h16v16H0z" fill="#a82b12" /><path d="M2 14C3 8 7 9 5 5c3 1 5 0 9-3-1 3-6 3-4 7 2 2 4 0 5-1-1 6-7 2-8 7M2 3l2 2M12 13l3 1" stroke="#f1a32c" strokeWidth="1.400" /></Ico>
          <Ico><path d="M5 5h10v7H5z" stroke="#fff" /><path d="M6.500 6.500h7v4h-7z" fill="#fff" /><path d="M15 7v3M0 4h5M1 2v4c0 2 3 2 3 0V2M2.500 7v4H5" stroke="#fff" /></Ico>
          <Ico><path d="M2 13C3 7 7 4 13 3M5 14c1-4 4-7 9-7M8 14c1-2 3-4 6-4" stroke="#ccc" /><path d="M11 14c1-1 2-1 3-1v2z" fill="#fff" /></Ico>
          <Ico><path d="M0 6h3l4-4v12l-4-4H0z" stroke="#fff" /><path d="M9 5c1 2 1 4 0 6M11 3c3 3 3 7 0 10" stroke="#fff" /><path d="M13 1c4 4 4 10 0 14" stroke="#888" /></Ico>
          <svg viewBox="0 0 23 14" fill="none" className="h-[14px] w-[23px]"><path d="M.5.5h22v13H.5z" stroke="#fff" /><path d="M3 4h17M3 7h17" stroke="#fff" strokeDasharray="2 1" /><path d="M3 10.500h2m2 0h9m2 0h2" stroke="#fff" /></svg>
          <span className="mx-[3px] text-[13px]">中</span>
          <Ico><rect x="1" y="1" width="14" height="14" rx="2" transform="rotate(-8 8 8)" fill="#f04a16" /><path d="M12 4H6.500c-3 0-2.500 3.500 0 3.700l3 .3c2.500.3 2.500 3.500 0 3.800H4" stroke="#fff" strokeWidth="2.200" /></Ico>
        </div>
        <div className="mr-[18px] ml-4 w-[62px] text-center leading-[19px] whitespace-nowrap">11:46<br />2018/10/3</div>
        <button type="button" aria-label="操作中心" className="mr-5">
          <Ico><path d="M.5 1.500h15v11h-5L8 15l-2.500-2.500h-5z" stroke="#fff" /></Ico>
        </button>
        <span className="mr-1 h-10 w-px bg-[#5d6568]" />
      </div>
    </nav>
  );
}

export default function App() {
  return (
    <div className={`relative flex h-screen flex-col overflow-hidden bg-[#f0f0f0] text-[12px] leading-4 text-black ${ui}`}>
      <TitleBar />
      <div className="absolute -top-[29px] left-[54%] ml-[-21px] flex h-12 w-12 items-end justify-center rounded-full border-2 border-[#d8d8d8] bg-linear-to-b from-[#5fd86f] to-[#2fb749] pb-[2px] text-[11px] leading-3 font-bold text-white shadow-md shadow-gray-400">
        77
      </div>
      <AccountRow />
      <MainToolbar />
      <div className="flex min-h-0 grow">
        <ModuleDock />
        <div className="ml-[6px] flex min-w-0 grow flex-col">
          <ComponentToolbar />
          <div className="flex min-h-0 grow">
            <ComponentList />
            <main className="ml-1 flex min-w-0 grow flex-col bg-white">
              <div className={`flex h-5 shrink-0 items-end ${song}`}>
                <button type="button" className="h-5 w-[62px] border-t border-r border-[#d8d8d8] bg-white leading-[18px]">属性编辑</button>
                <span className="grow border-b border-[#d8d8d8]" />
              </div>
              <div className="relative mt-1 mr-1 mb-[2px] ml-[2px] flex min-h-0 grow border border-[#a0a0a0]">
                <div className="relative grow pl-px">
                  <PropertyGrid />
                  <svg viewBox="0 0 200 120" fill="none" className="pointer-events-none absolute top-[43px] left-[146px] h-[120px] w-[200px]" aria-hidden="true">
                    <ellipse cx="100" cy="60" rx="96.500" ry="56.500" stroke="#f00" strokeWidth="7" />
                  </svg>
                </div>
                <ScrollBar
                  thumb={<><span className="grow-[355] bg-[#cdcdcd]" /><span className="grow-[172]" /></>}
                />
                <SectionEditor />
              </div>
            </main>
          </div>
        </div>
      </div>
      <StatusBar />
      <Taskbar />
    </div>
  );
}
